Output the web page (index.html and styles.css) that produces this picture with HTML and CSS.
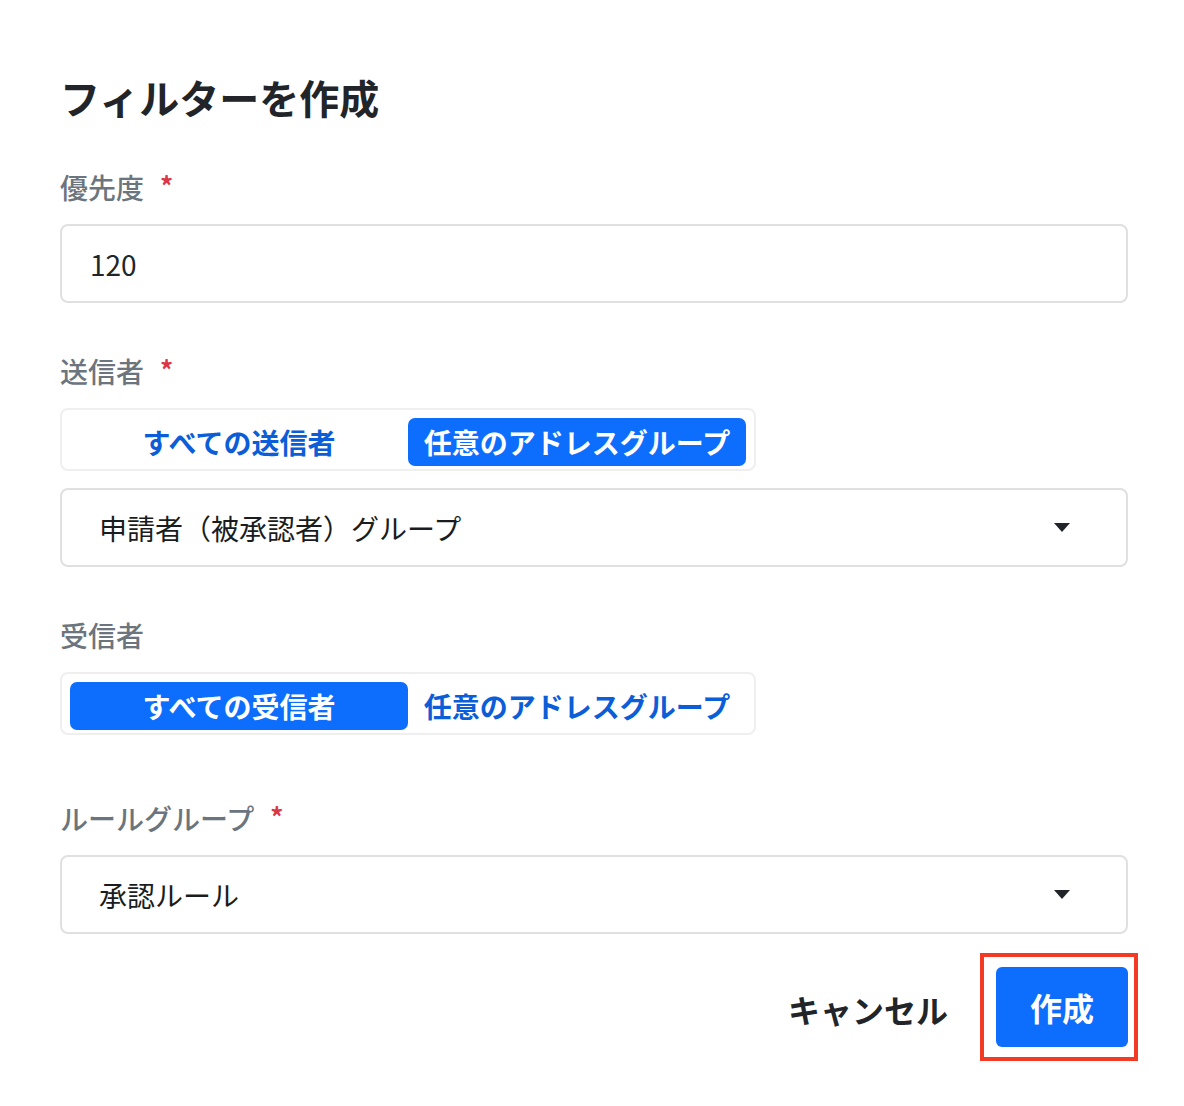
FILE: index.html
```html
<!DOCTYPE html>
<html lang="ja">
<head>
<meta charset="utf-8">
<title>フィルターを作成</title>
<link rel="stylesheet" href="styles.css">
</head>
<body>
<div class="page">
  <h1 class="title">フィルターを作成</h1>

  <div class="field field-first">
    <div class="label">優先度<span class="req">*</span></div>
    <div class="input">120</div>
  </div>

  <div class="field">
    <div class="label">送信者<span class="req">*</span></div>
    <div class="seg">
      <div class="seg-btn">すべての送信者</div>
      <div class="seg-btn active">任意のアドレスグループ</div>
    </div>
    <div class="select select-after-seg">
      <span class="select-text">申請者（被承認者）グループ</span>
      <span class="caret"></span>
    </div>
  </div>

  <div class="field">
    <div class="label">受信者</div>
    <div class="seg">
      <div class="seg-btn active">すべての受信者</div>
      <div class="seg-btn">任意のアドレスグループ</div>
    </div>
  </div>

  <div class="field field-wide">
    <div class="label">ルールグループ<span class="req">*</span></div>
    <div class="select">
      <span class="select-text">承認ルール</span>
      <span class="caret"></span>
    </div>
  </div>

  <div class="footer">
    <div class="cancel">キャンセル</div>
    <div class="highlight">
      <div class="primary">作成</div>
    </div>
  </div>
</div>
</body>
</html>
```

FILE: styles.css
```css
* { box-sizing: border-box; }
html, body { margin: 0; padding: 0; background: #ffffff; }
body {
  font-family: "Noto Sans CJK JP", "Noto Sans", sans-serif;
  color: #212529;
}
.page {
  width: 1184px;
  min-height: 1106px;
  padding: 69px 56px 40px 60px;
}
.title {
  margin: 0;
  font-size: 40px;
  line-height: 56px;
  font-weight: 700;
  color: #212529;
}
.field { margin-top: 48px; }
.field-first { margin-top: 42px; }
.field-wide { margin-top: 63px; }
.label {
  height: 40px;
  font-size: 28px;
  line-height: 40px;
  font-weight: 500;
  color: #6c757d;
  margin-bottom: 17px;
  overflow: visible;
}
.req {
  color: #dc3545;
  font-weight: 700;
  font-size: 26px;
  line-height: 1;
  margin-left: 16px;
  position: relative;
  top: -3px;
}
.input {
  height: 79px;
  border: 2px solid #e0e0e0;
  border-radius: 8px;
  padding-left: 28px;
  font-size: 28px;
  display: flex;
  align-items: center;
  color: #212529;
}
.seg {
  width: 696px;
  height: 63px;
  border: 2px solid #efefef;
  border-radius: 8px;
  padding: 8px 8px 3px 8px;
  display: flex;
}
.seg-btn {
  flex: 1;
  height: 48px;
  border-radius: 7px;
  display: flex;
  align-items: center;
  justify-content: center;
  font-size: 28px;
  font-weight: 700;
  color: #0b5ed7;
}
.seg-btn.active {
  background: #0d6efd;
  color: #ffffff;
}
.select {
  height: 79px;
  border: 2px solid #e0e0e0;
  border-radius: 8px;
  padding: 0 56px 0 37px;
  display: flex;
  align-items: center;
  justify-content: space-between;
  font-size: 28px;
  font-weight: 400;
  color: #1a1d20;
}
.select-after-seg { margin-top: 17px; }
.caret {
  width: 0;
  height: 0;
  border-left: 8px solid transparent;
  border-right: 8px solid transparent;
  border-top: 9px solid #212529;
}
.footer {
  margin-top: 19px;
  display: flex;
  justify-content: flex-end;
  align-items: center;
}
.cancel {
  font-size: 32px;
  font-weight: 700;
  color: #212529;
  margin-right: 32px;
  margin-top: 4px;
}
.highlight {
  border: 4px solid #f23a24;
  padding: 10px 6px 10px 12px;
  margin-right: -10px;
}
.primary {
  width: 132px;
  height: 80px;
  background: #0d6efd;
  border-radius: 6px;
  color: #ffffff;
  font-size: 32px;
  font-weight: 700;
  display: flex;
  align-items: center;
  justify-content: center;
}
```
